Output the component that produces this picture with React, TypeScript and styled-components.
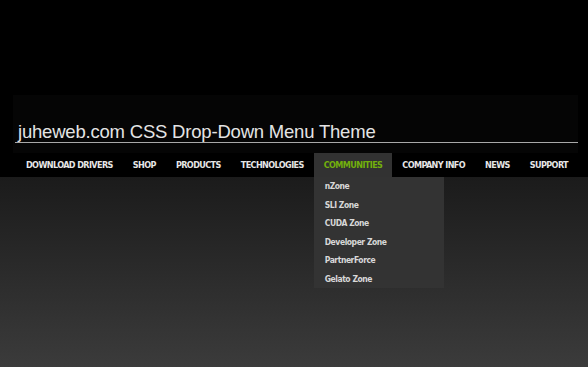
import React from 'react';
import styled, { createGlobalStyle } from 'styled-components';

const GlobalStyle = createGlobalStyle`
  html, body {
    margin: 0;
    padding: 0;
    height: 100%;
  }
  body {
    background: #000;
    font-family: "DejaVu Sans Condensed", "DejaVu Sans", sans-serif;
  }
`;

const Page = styled.div`
  min-height: 100vh;
  display: flex;
  flex-direction: column;
`;

const Top = styled.div`
  background: #000;
  padding-top: 95px;
`;

const Container = styled.div`
  margin: 0 10px 0 13px;
  background: #050505;
`;

const Title = styled.h1`
  margin: 0 0 10px 2px;
  padding: 27px 0 0 3px;
  border-bottom: 1px solid #a8a8a8;
  font-family: "Liberation Sans", Arial, sans-serif;
  font-weight: normal;
  font-size: 18.5px;
  line-height: 20px;
  color: #e4e4e4;
  letter-spacing: -0.2px;
`;

const Nav = styled.ul`
  list-style: none;
  margin: 0;
  padding: 0 0 0 3px;
  display: flex;
  height: 24px;
  background: #000;
`;

const NavItem = styled.li<{ $active?: boolean }>`
  position: relative;
  padding: 0 10px;
  display: flex;
  align-items: center;
  background: ${p => (p.$active ? '#323232' : 'transparent')};
  color: ${p => (p.$active ? '#72b00c' : '#e6e6e6')};
  font-size: 9px;
  font-weight: bold;
  letter-spacing: -0.6px;
  white-space: nowrap;
`;

const Dropdown = styled.ul`
  position: absolute;
  top: 24px;
  left: 0;
  width: 130px;
  margin: 0;
  padding: 0;
  list-style: none;
  background: #333;
`;

const DropItem = styled.li`
  height: 18.5px;
  line-height: 18.5px;
  padding-left: 11px;
  color: #d8d8d8;
  font-size: 8.5px;
  font-weight: bold;
  letter-spacing: -0.45px;
  white-space: nowrap;
`;

const Below = styled.div`
  flex: 1;
  background: linear-gradient(to bottom, #1b1b1b 0%, #3b3b3b 100%);
`;

const menu = [
  'DOWNLOAD DRIVERS',
  'SHOP',
  'PRODUCTS',
  'TECHNOLOGIES',
  'COMMUNITIES',
  'COMPANY INFO',
  'NEWS',
  'SUPPORT',
];

const communities = [
  'nZone',
  'SLI Zone',
  'CUDA Zone',
  'Developer Zone',
  'PartnerForce',
  'Gelato Zone',
];

export default function App() {
  return (
    <>
      <GlobalStyle />
      <Page>
        <Top>
          <Container>
            <Title>juheweb.com CSS Drop-Down Menu Theme</Title>
            <Nav>
              {menu.map(item => (
                <NavItem key={item} $active={item === 'COMMUNITIES'}>
                  {item}
                  {item === 'COMMUNITIES' && (
                    <Dropdown>
                      {communities.map(c => (
                        <DropItem key={c}>{c}</DropItem>
                      ))}
                    </Dropdown>
                  )}
                </NavItem>
              ))}
            </Nav>
          </Container>
        </Top>
        <Below />
      </Page>
    </>
  );
}
